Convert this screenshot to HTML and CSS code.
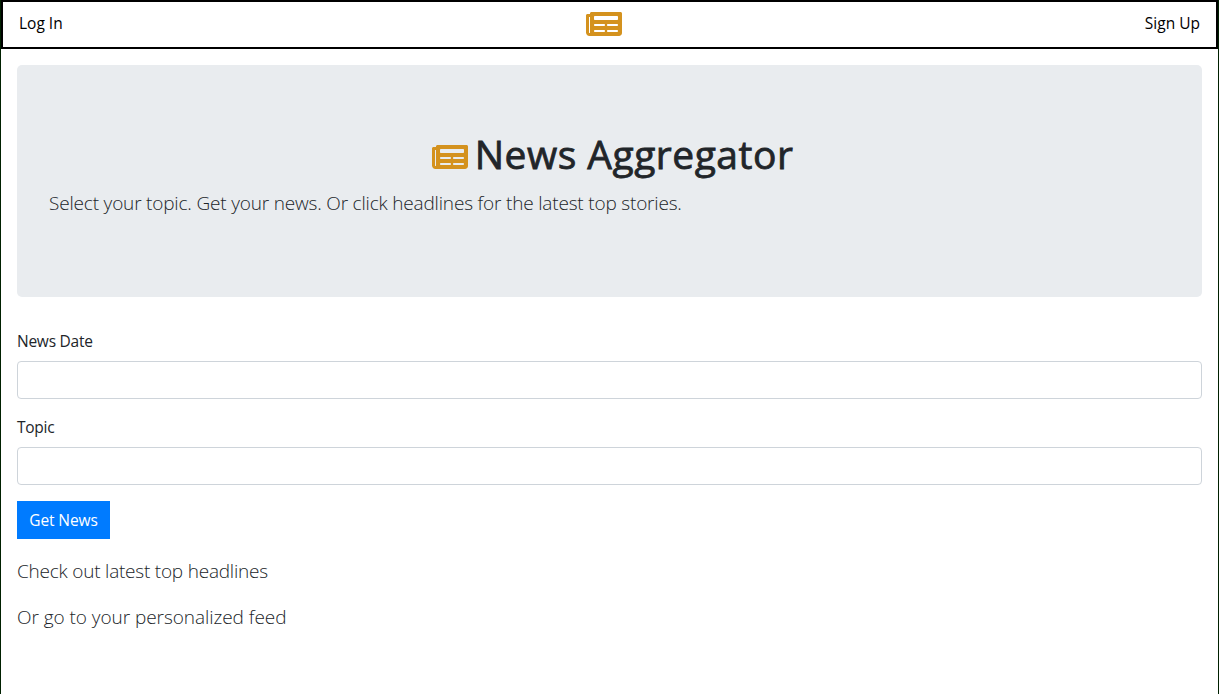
FILE: index.html
```html
<!DOCTYPE html>
<html lang="en">
<head>
<meta charset="utf-8">
<title>News Aggregator</title>
<link rel="stylesheet" href="styles.css">
</head>
<body>
<svg class="defs" aria-hidden="true"><symbol id="newspaper" viewBox="0 64 576 384"><path d="M552 64H88c-13.255 0-24 10.745-24 24v8H24c-13.255 0-24 10.745-24 24v272c0 30.928 25.072 56 56 56h472c26.51 0 48-21.49 48-48V88c0-13.255-10.745-24-24-24zM56 400a8 8 0 0 1-8-8V144h16v248a8 8 0 0 1-8 8zm236-16H140c-6.627 0-12-5.373-12-12v-8c0-6.627 5.373-12 12-12h152c6.627 0 12 5.373 12 12v8c0 6.627-5.373 12-12 12zm208 0H348c-6.627 0-12-5.373-12-12v-8c0-6.627 5.373-12 12-12h152c6.627 0 12 5.373 12 12v8c0 6.627-5.373 12-12 12zm-208-96H140c-6.627 0-12-5.373-12-12v-8c0-6.627 5.373-12 12-12h152c6.627 0 12 5.373 12 12v8c0 6.627-5.373 12-12 12zm208 0H348c-6.627 0-12-5.373-12-12v-8c0-6.627 5.373-12 12-12h152c6.627 0 12 5.373 12 12v8c0 6.627-5.373 12-12 12zm0-96H140c-6.627 0-12-5.373-12-12v-40c0-6.627 5.373-12 12-12h360c6.627 0 12 5.373 12 12v40c0 6.627-5.373 12-12 12z"/></symbol></svg>
<nav class="navbar">
  <a class="nav-link">Log In</a>
  <svg class="icon"><use href="#newspaper"/></svg>
  <a class="nav-link">Sign Up</a>
</nav>
<main class="content">
  <header class="jumbotron">
    <h1 class="title"><svg class="icon"><use href="#newspaper"/></svg><span>News Aggregator</span></h1>
    <p class="lead intro">Select your topic. Get your news. Or click headlines for the latest top stories.</p>
  </header>
  <form class="news-form">
    <label class="label" for="date">News Date</label>
    <input class="field" id="date" type="text">
    <label class="label" for="topic">Topic</label>
    <input class="field" id="topic" type="text">
    <button class="button" type="button">Get News</button>
  </form>
  <p class="lead headlines">Check out latest top headlines</p>
  <p class="lead feed">Or go to your personalized feed</p>
</main>
</body>
</html>
```
FILE: styles.css
```css
* { box-sizing: border-box; }
html { background: #fff; }
body {
  margin: 0;
  height: 694px;
  overflow: hidden;
  border: solid #002000;
  border-width: 0 1px;
  background: #fff;
  color: #212529;
  font: 15.5px/24px "Open Sans", "Noto Sans", sans-serif;
}
.defs { display: none; }
.icon { display: block; width: 36px; height: 24px; fill: #d4921e; }
.navbar {
  display: flex;
  justify-content: space-between;
  align-items: flex-start;
  height: 49px;
  padding: 9px 16px 0;
  border: 2px solid #000;
}
.navbar .icon { margin-top: 1px; }
.nav-link { color: #000; }
.content { padding: 16px; }
.jumbotron {
  height: 232px;
  padding: 64px 32px;
  border-radius: 5px;
  background: #e9ecef;
}
.title {
  display: flex;
  justify-content: center;
  align-items: center;
  gap: 7px;
  height: 50px;
  margin: 0 0 9px;
  padding: 0 0 0 6px;
  font-size: 39px;
  line-height: 48px;
  font-weight: 500;
  letter-spacing: 0.5px;
  -webkit-text-stroke: 0.8px #212529;
}
.title .icon { margin-top: 6px; }
.lead { margin: 0; font-size: 19px; line-height: 30px; font-weight: 300; }
.intro { letter-spacing: -0.18px; }
.news-form { display: flex; flex-direction: column; align-items: flex-start; padding-top: 32px; }
.label { margin-bottom: 8px; letter-spacing: -0.25px; }
.field {
  width: 100%;
  height: 38px;
  margin-bottom: 16px;
  border: 1px solid #ced4da;
  border-radius: 4px;
  background: #fff;
}
.button {
  width: 93px;
  height: 38px;
  padding: 0;
  border: 0;
  background: #007bff;
  color: #fff;
  font: inherit;
  letter-spacing: -0.1px;
}
.headlines { margin: 17px 0 16px; letter-spacing: -0.22px; }
.feed { letter-spacing: -0.05px; }
```
